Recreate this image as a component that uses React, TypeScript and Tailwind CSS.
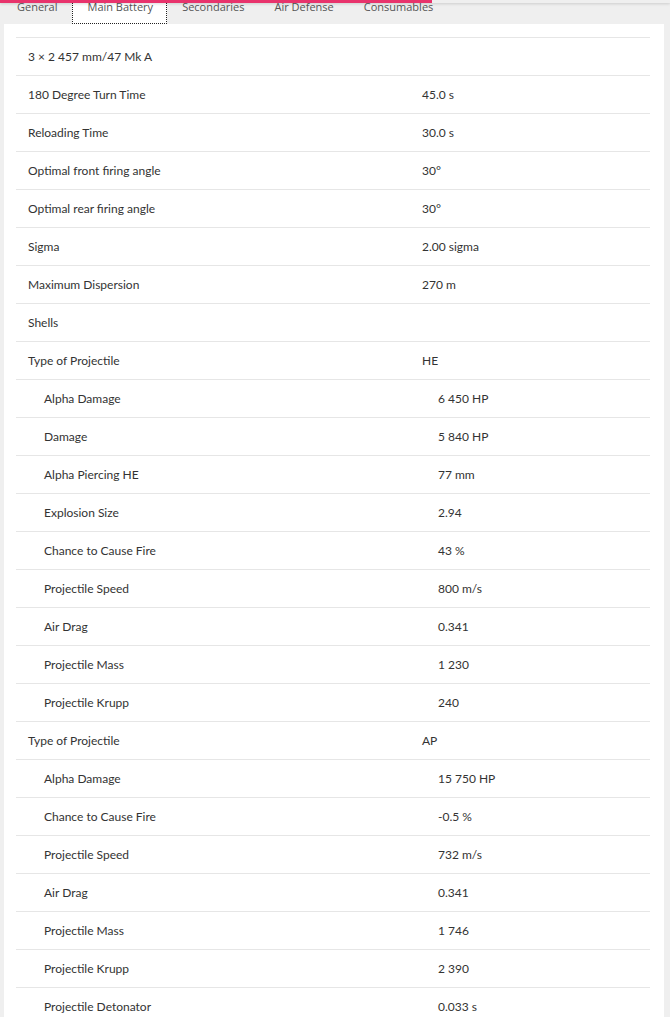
import React from 'react';

interface Row {
  label: string;
  value?: string;
  sub?: boolean;
}

const rows: Row[] = [
  { label: '3 × 2 457 mm/47 Mk A' },
  { label: '180 Degree Turn Time', value: '45.0 s' },
  { label: 'Reloading Time', value: '30.0 s' },
  { label: 'Optimal front firing angle', value: '30°' },
  { label: 'Optimal rear firing angle', value: '30°' },
  { label: 'Sigma', value: '2.00 sigma' },
  { label: 'Maximum Dispersion', value: '270 m' },
  { label: 'Shells' },
  { label: 'Type of Projectile', value: 'HE' },
  { label: 'Alpha Damage', value: '6 450 HP', sub: true },
  { label: 'Damage', value: '5 840 HP', sub: true },
  { label: 'Alpha Piercing HE', value: '77 mm', sub: true },
  { label: 'Explosion Size', value: '2.94', sub: true },
  { label: 'Chance to Cause Fire', value: '43 %', sub: true },
  { label: 'Projectile Speed', value: '800 m/s', sub: true },
  { label: 'Air Drag', value: '0.341', sub: true },
  { label: 'Projectile Mass', value: '1 230', sub: true },
  { label: 'Projectile Krupp', value: '240', sub: true },
  { label: 'Type of Projectile', value: 'AP' },
  { label: 'Alpha Damage', value: '15 750 HP', sub: true },
  { label: 'Chance to Cause Fire', value: '-0.5 %', sub: true },
  { label: 'Projectile Speed', value: '732 m/s', sub: true },
  { label: 'Air Drag', value: '0.341', sub: true },
  { label: 'Projectile Mass', value: '1 746', sub: true },
  { label: 'Projectile Krupp', value: '2 390', sub: true },
  { label: 'Projectile Detonator', value: '0.033 s', sub: true },
];

const tabs = ['General', 'Main Battery', 'Secondaries', 'Air Defense', 'Consumables'];

export default function App(): JSX.Element {
  return (
    <div className="relative min-h-[1017px] bg-[#efefef] font-['Lato',sans-serif] text-[12px] text-[#333]">
      {/* header edge + loading bar */}
      <div className="absolute left-0 top-0 h-[3px] w-full shadow-[0_1px_3px_rgba(0,0,0,0.15)]" />
      <div className="absolute left-0 top-0 h-[3px] w-[432px] bg-[#e8336c]" />

      <div className="flex h-[24px] pl-[2px] font-['Open_Sans',sans-serif] text-[11px] text-[#555]">
        {tabs.map((t) => (
          <div
            key={t}
            className={
              t === 'Main Battery'
                ? 'h-[24px] border border-dotted border-[#222] border-t-0 bg-white pl-[14px] pr-[13px] leading-[14px]'
                : 'h-[24px] px-[15px] leading-[14px]'
            }
          >
            {t}
          </div>
        ))}
      </div>

      <div className="ml-1 w-[660px] bg-white pb-2 pl-[12px] pr-[14px] pt-[13px]">
        {rows.map((r, i) => (
          <div key={i} className="flex h-[38px] items-center border-t border-[#e6e6e6]">
            <div className={r.sub ? 'w-[394px] pl-[28px]' : 'w-[394px] pl-[12px]'}>{r.label}</div>
            <div className={r.sub ? 'pl-[28px]' : 'pl-[12px]'}>{r.value}</div>
          </div>
        ))}
      </div>
    </div>
  );
}
